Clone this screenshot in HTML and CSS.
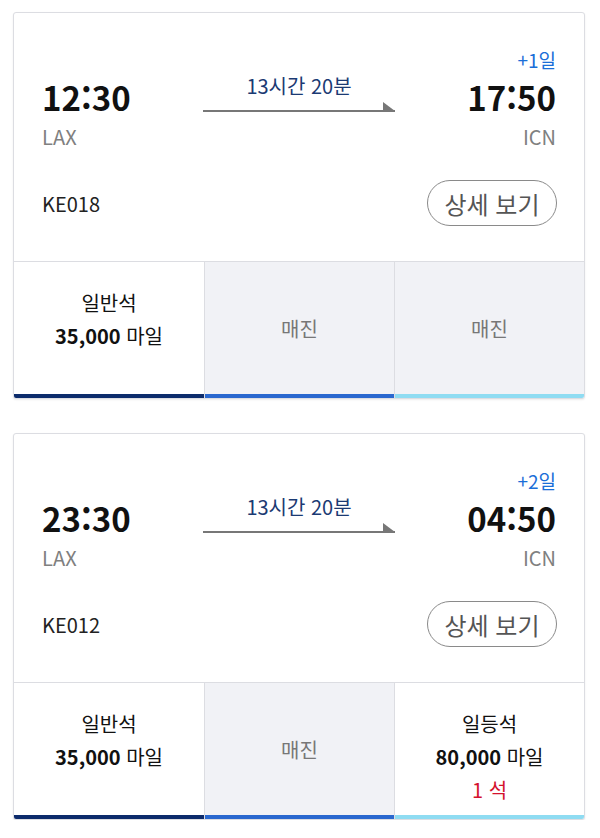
FILE: index.html
```html
<!DOCTYPE html>
<html lang="ko">
<head>
<meta charset="utf-8">
<link rel="stylesheet" href="styles.css">
</head>
<body>
<div class="list">
  <div class="card">
    <div class="info">
      <div class="route">
        <div class="day">+1일</div>
        <div class="time dep">12:30</div>
        <div class="mid">
          <div class="dur">13시간 20분</div>
          <div class="arrow"></div>
        </div>
        <div class="time arr">17:50</div>
        <div class="apt dep">LAX</div>
        <div class="apt arr">ICN</div>
      </div>
      <div class="flight">
        <span class="fno">KE018</span>
        <span class="detail">상세 보기</span>
      </div>
    </div>
    <div class="fares">
      <div class="fare c1"><div class="cls">일반석</div><div class="miles"><span class="num">35,000</span> 마일</div></div>
      <div class="fare c2 sold"><div class="soldtxt">매진</div></div>
      <div class="fare c3 sold"><div class="soldtxt">매진</div></div>
    </div>
  </div>

  <div class="card">
    <div class="info">
      <div class="route">
        <div class="day">+2일</div>
        <div class="time dep">23:30</div>
        <div class="mid">
          <div class="dur">13시간 20분</div>
          <div class="arrow"></div>
        </div>
        <div class="time arr">04:50</div>
        <div class="apt dep">LAX</div>
        <div class="apt arr">ICN</div>
      </div>
      <div class="flight">
        <span class="fno">KE012</span>
        <span class="detail">상세 보기</span>
      </div>
    </div>
    <div class="fares">
      <div class="fare c1"><div class="cls">일반석</div><div class="miles"><span class="num">35,000</span> 마일</div></div>
      <div class="fare c2 sold"><div class="soldtxt">매진</div></div>
      <div class="fare c3"><div class="cls">일등석</div><div class="miles"><span class="num">80,000</span> 마일</div><div class="seats">1 석</div></div>
    </div>
  </div>
</div>
</body>
</html>
```

FILE: styles.css
```css
* { box-sizing: border-box; }
html, body { margin: 0; background: #fff; }
body {
  font-family: "Noto Sans CJK KR", "Noto Sans", sans-serif;
  color: #111;
}
.list {
  padding: 12px 15px 0 13px;
  display: flex;
  flex-direction: column;
  gap: 34px;
}
.card {
  border: 1px solid #dcdde2;
  border-radius: 3px;
  box-shadow: 0 1px 2px rgba(0,0,0,0.08);
  background: #fff;
  overflow: hidden;
}
.info {
  padding: 35px 28px 0 28px;
  height: 248px;
}
.route {
  display: grid;
  grid-template-columns: 1fr 192px 1fr;
  grid-template-rows: 24px 44px 26px;
  row-gap: 4px;
}
.day {
  grid-column: 3; grid-row: 1;
  text-align: right;
  color: #1a6ed8;
  font-size: 19px;
  line-height: 24px;
}
.time {
  grid-row: 2;
  font-size: 33px;
  font-weight: 700;
  line-height: 42px;
  color: #111;
}
.time.dep { grid-column: 1; }
.time.arr { grid-column: 3; text-align: right; }
.apt {
  grid-row: 3;
  font-size: 20px;
  line-height: 26px;
  color: #808080;
}
.apt.dep { grid-column: 1; }
.apt.arr { grid-column: 3; text-align: right; }
.mid {
  grid-column: 2; grid-row: 1 / span 2;
  display: flex;
  flex-direction: column;
  justify-content: flex-end;
  align-items: stretch;
  padding-bottom: 8px;
  gap: 5px;
}
.dur {
  text-align: center;
  color: #1b3a73;
  font-size: 20px;
  line-height: 24px;
}
.arrow {
  position: relative;
  height: 9px;
  border-bottom: 2px solid #777;
}
.arrow::after {
  content: "";
  position: absolute;
  right: 0;
  bottom: -1px;
  width: 0; height: 0;
  border-bottom: 9px solid #777;
  border-right: 12px solid transparent;
}
.flight {
  margin-top: 30px;
  display: flex;
  justify-content: space-between;
  align-items: center;
}
.fno {
  font-size: 20px;
  color: #222;
}
.detail {
  border: 1px solid #8a8a8a;
  border-radius: 23px;
  height: 46px;
  width: 130px;
  display: flex;
  align-items: center;
  justify-content: center;
  font-size: 24px;
  color: #555;
  margin-right: -1px;
}
.fares {
  display: grid;
  grid-template-columns: 1fr 1fr 1fr;
  border-top: 1px solid #dcdde2;
}
.fare {
  height: 136px;
  padding-top: 24px;
  text-align: center;
  font-size: 20px;
  line-height: 33px;
  color: #111;
}
.fare + .fare { border-left: 1px solid #dcdde2; }
.c1 { box-shadow: inset 0 -4px 0 #0c2b6b; }
.c2 { box-shadow: inset 0 -4px 0 #2a68cf; }
.c3 { box-shadow: inset 0 -4px 0 #8fdcf2; }
.sold {
  background: #f1f2f6;
  padding-top: 0;
  padding-bottom: 4px;
  display: flex;
  align-items: center;
  justify-content: center;
}
.soldtxt { color: #777; }
.num { font-weight: 700; }
.seats { color: #d4122d; }
```
